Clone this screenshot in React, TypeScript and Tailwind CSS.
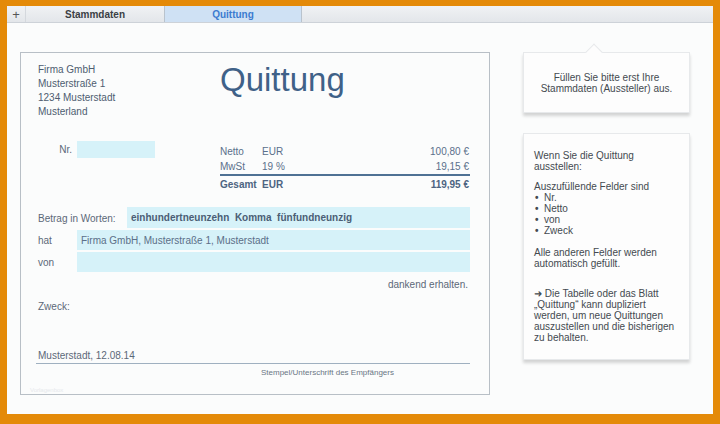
import React from 'react';

const font = { fontFamily: '"Liberation Sans", Arial, sans-serif' };

const Field: React.FC<{ className?: string; children?: React.ReactNode }> = ({ className, children }) => (
  <div className={`bg-[#d6f2f9] flex items-center pl-[4px] ${className ?? ''}`}>{children}</div>
);

const Callout: React.FC<{ className?: string; pointer?: boolean; children: React.ReactNode }> = ({
  className,
  pointer,
  children,
}) => (
  <div
    className={`relative bg-[#fdfdfd] border border-[#e7e9eb] shadow-[0_3px_3px_rgba(0,0,0,0.16)] ${className ?? ''}`}
  >
    {pointer && (
      <div className="absolute left-[64px] top-[-7px] w-[12px] h-[12px] rotate-45 bg-[#fdfdfd] border-l border-t border-[#e7e9eb]" />
    )}
    <div className="relative">{children}</div>
  </div>
);

export default function App() {
  return (
    <div
      style={font}
      className="w-[720px] h-[424px] bg-[#e48a08] pt-[6px] pl-[7px] pr-[7px] pb-[10px] overflow-hidden"
    >
      <div className="w-full h-full flex flex-col bg-[#fbfcfc]">
        {/* tab bar */}
        <div className="h-[17px] flex items-stretch bg-gradient-to-b from-[#f0f2f4] to-[#e3e6ea] border-b border-[#cdd2d8] text-[10px]">
          <div className="w-[19px] flex items-center justify-center text-[#555] text-[13px] leading-none border-r border-[#d4d8dd]">
            +
          </div>
          <div className="w-[138px] flex items-center justify-center text-[#3b3f45] font-semibold">Stammdaten</div>
          <div className="w-[138px] flex items-center justify-center bg-[#cfe1f4] border-x border-[#b9c3cd] text-[#3b7bd0] font-semibold">
            Quittung
          </div>
          <div className="flex-1" />
        </div>

        {/* content */}
        <div className="flex-1 flex items-start pt-[29px] pl-[13px]">
          {/* receipt sheet */}
          <div className="w-[470px] h-[343px] border border-[#b8bfc6] bg-[#fbfcfc] pl-[17px] pr-[19px] pt-[10px] flex flex-col text-[10px] text-[#5b6878]">
            <div className="flex items-start">
              <div className="w-[182px] leading-[14px] text-[#4e5d70]">
                <div>Firma GmbH</div>
                <div>Musterstraße 1</div>
                <div>1234 Musterstadt</div>
                <div>Musterland</div>
              </div>
              <div className="mt-[-2px] text-[33px] leading-[38px] text-[#3f6188]">Quittung</div>
            </div>

            <div className="flex items-start mt-[22px]">
              <div className="w-[182px] flex items-center">
                <div className="w-[39px] text-right pr-[5px] text-[#5b6878]">Nr.</div>
                <Field className="w-[78px] h-[17px]" />
              </div>
              <div className="flex-1 mt-[3px] text-[#5a6f8b] leading-[15px]">
                <div className="flex">
                  <div className="w-[42px]">Netto</div>
                  <div className="flex-1">EUR</div>
                  <div className="pr-[1px]">100,80 €</div>
                </div>
                <div className="flex border-b-2 border-[#4f7194]">
                  <div className="w-[42px]">MwSt</div>
                  <div className="flex-1">19 %</div>
                  <div className="pr-[1px]">19,15 €</div>
                </div>
                <div className="flex font-bold text-[#4d6481] pt-[1px]">
                  <div className="w-[42px]">Gesamt</div>
                  <div className="flex-1">EUR</div>
                  <div className="pr-[1px]">119,95 €</div>
                </div>
              </div>
            </div>

            <div className="flex items-center mt-[15px]">
              <div className="w-[89px] pt-[2px]">Betrag in Worten:</div>
              <Field className="flex-1 h-[21px] font-bold text-[#4b5e75] whitespace-pre">
                einhundertneunzehn  Komma  fünfundneunzig
              </Field>
            </div>
            <div className="flex items-center mt-[2px]">
              <div className="w-[39px]">hat</div>
              <Field className="flex-1 h-[20px] text-[#5b6f88]">Firma GmbH, Musterstraße 1, Musterstadt</Field>
            </div>
            <div className="flex items-center mt-[2px]">
              <div className="w-[39px]">von</div>
              <Field className="flex-1 h-[20px]" />
            </div>

            <div className="mt-[6px] leading-[14px] text-right pr-[2px]">dankend erhalten.</div>
            <div className="mt-[8px] leading-[14px]">Zweck:</div>

            <div className="mt-[35px] leading-[14px] border-b border-[#9fb0c0] ml-[-2px] pl-[2px]">
              Musterstadt, 12.08.14
            </div>
            <div className="mt-[4px] text-[8px] leading-[9px] text-[#6a7684] pl-[223px]">
              Stempel/Unterschrift des Empfängers
            </div>
            <div className="mt-[9px] ml-[-8px] text-[6px] leading-[8px] text-[#e6e9ec]">Vorlagenbox</div>
          </div>

          {/* help panel */}
          <div className="ml-[33px] w-[167px] flex flex-col text-[10px] text-[#444a50] leading-[11px]">
            <Callout pointer className="h-[61px] pt-[19px] text-center">
              <div>Füllen Sie bitte erst Ihre</div>
              <div>Stammdaten (Aussteller) aus.</div>
            </Callout>

            <Callout className="mt-[20px] h-[227px] pt-[16px] pl-[10px] pr-[6px]">
              <div>Wenn Sie die Quittung</div>
              <div>ausstellen:</div>
              <div className="mt-[9px]">Auszufüllende Felder sind</div>
              {['Nr.', 'Netto', 'von', 'Zweck'].map((item) => (
                <div key={item} className="flex">
                  <span className="w-[10px] pl-[1px] font-bold">•</span>
                  <span>{item}</span>
                </div>
              ))}
              <div className="mt-[11px]">Alle anderen Felder werden</div>
              <div>automatisch gefüllt.</div>
              <div className="mt-[19px]">➜ Die Tabelle oder das Blatt</div>
              <div>„Quittung“ kann dupliziert</div>
              <div>werden, um neue Quittungen</div>
              <div>auszustellen und die bisherigen</div>
              <div>zu behalten.</div>
            </Callout>
          </div>
        </div>
      </div>
    </div>
  );
}
